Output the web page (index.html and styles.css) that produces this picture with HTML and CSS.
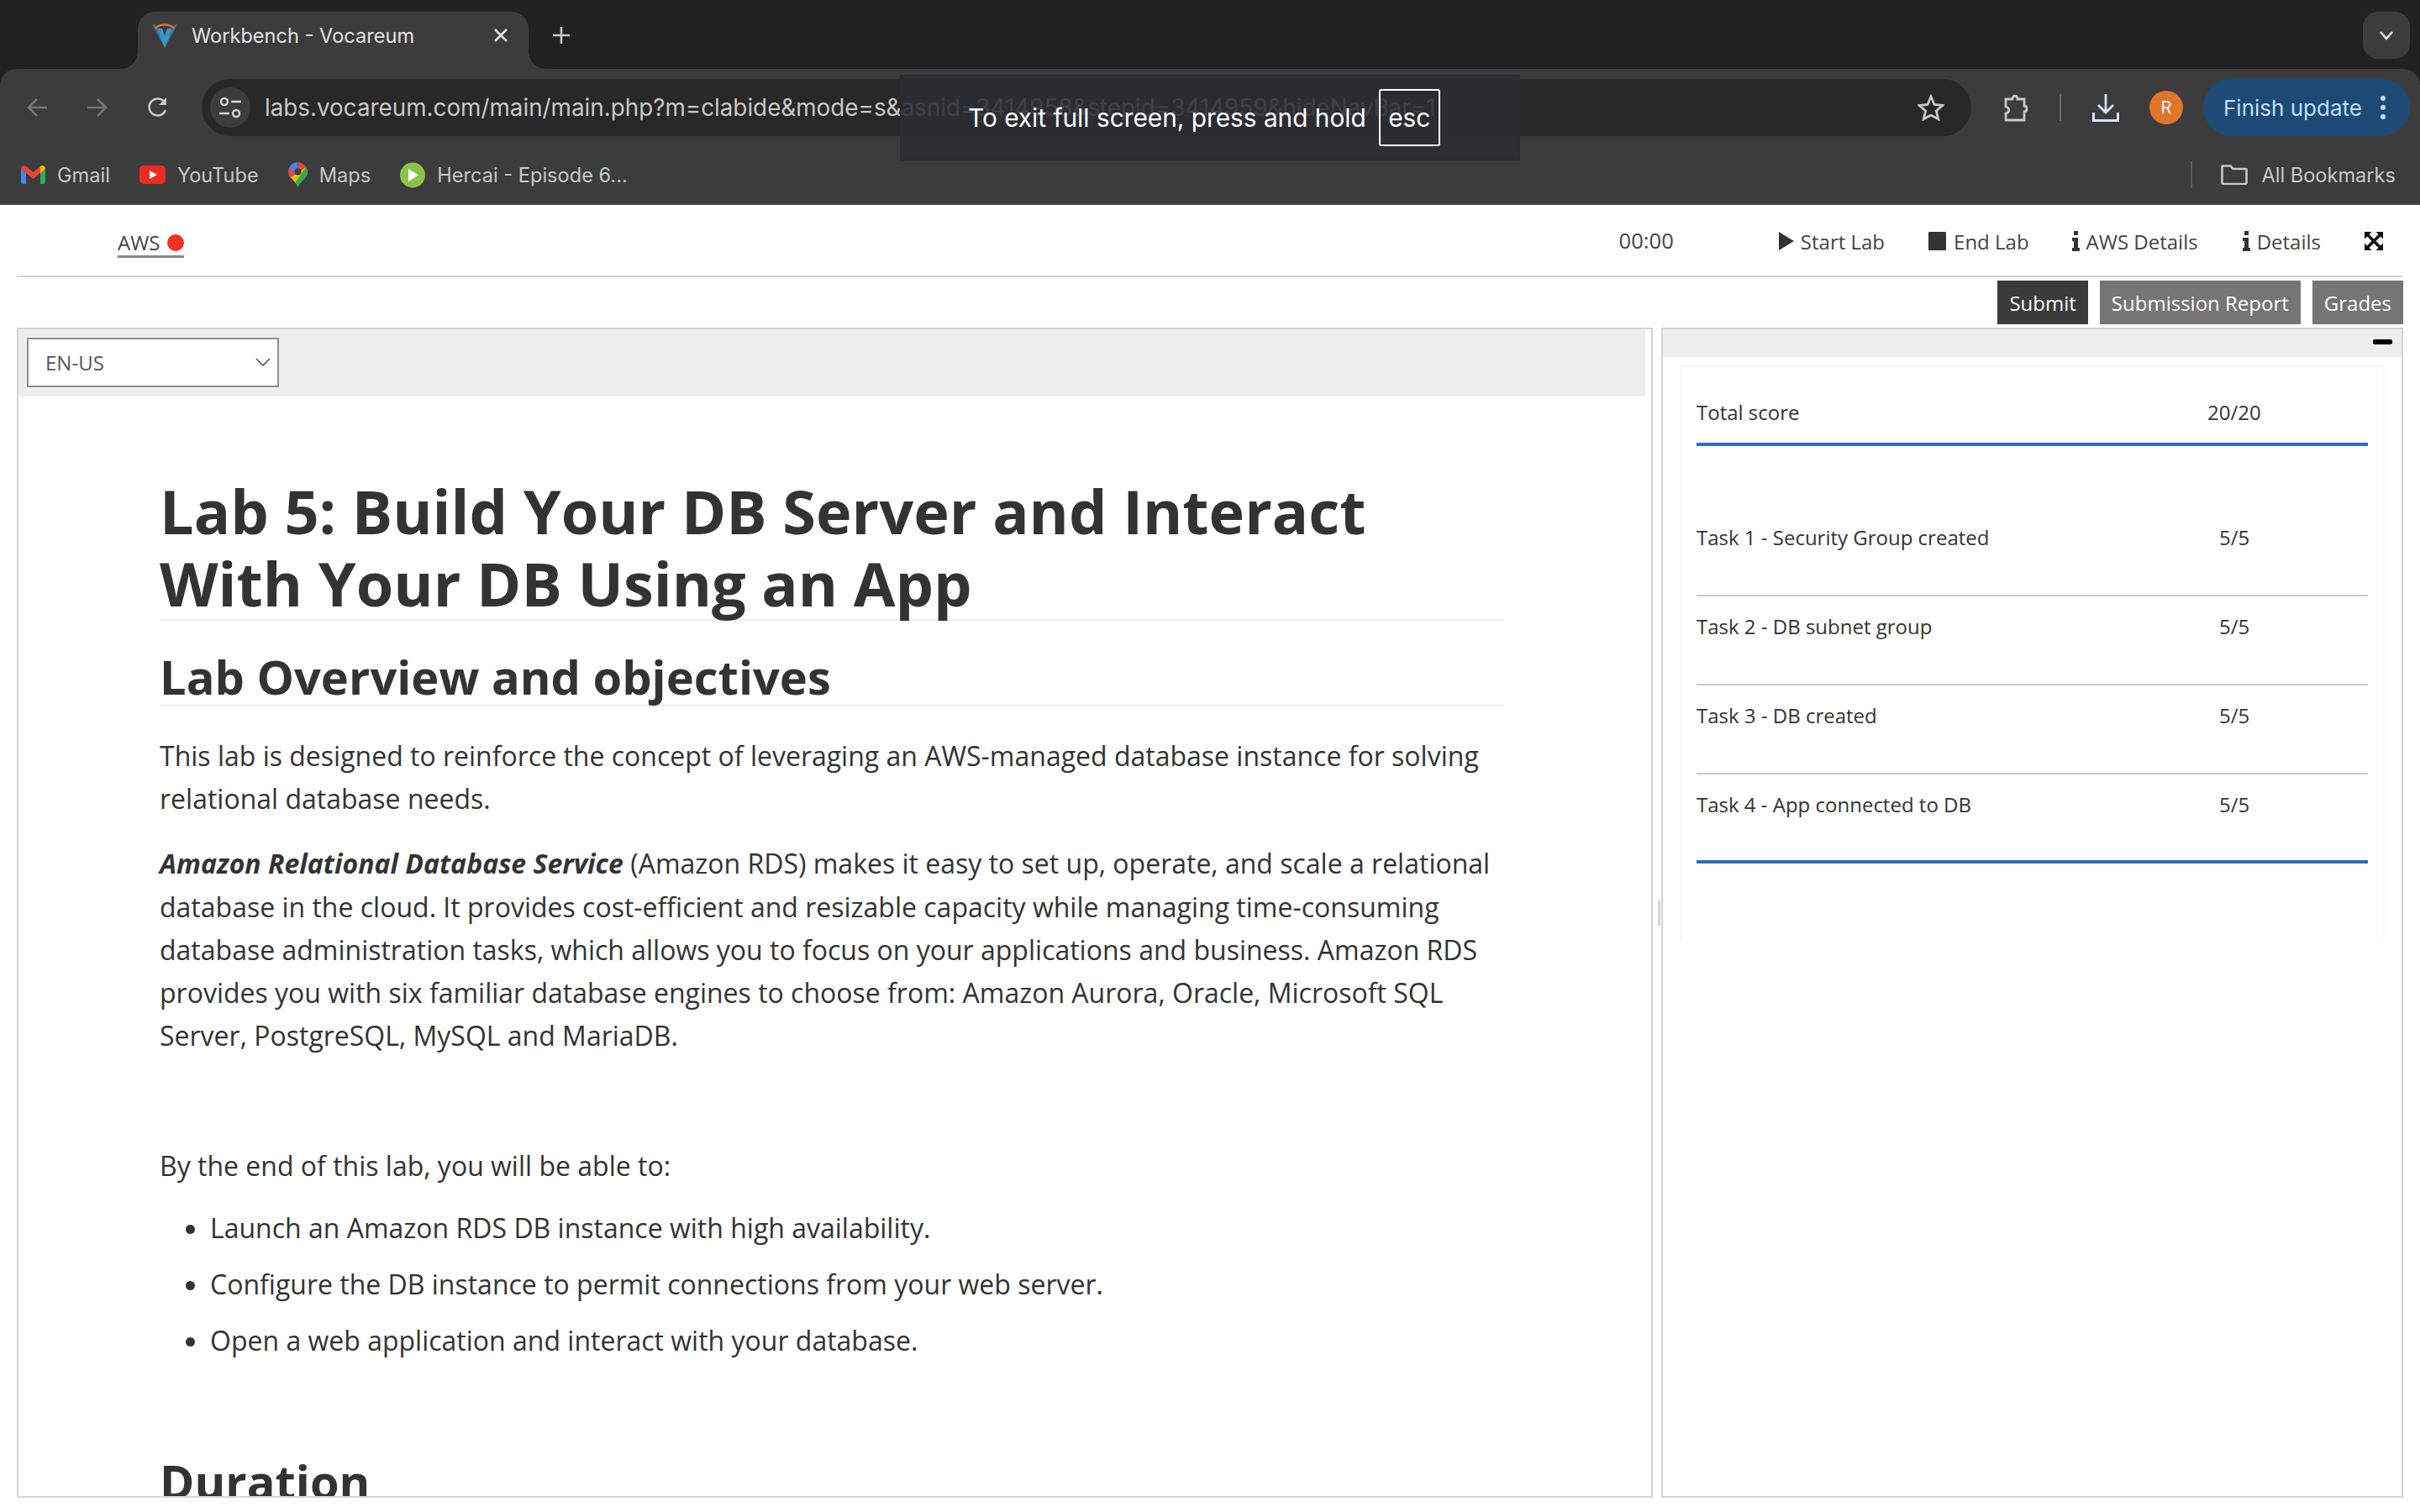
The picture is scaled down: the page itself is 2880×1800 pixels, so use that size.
FILE: index.html
```html
<!DOCTYPE html>
<html>
<head>
<meta name="viewport" content="width=device-width, initial-scale=1">
<title>Workbench - Vocareum</title>
<link rel="stylesheet" href="styles.css">
</head>
<body>

<div class="browser">
  <!-- browser tab strip -->
  <div class="tabstrip">
    <div class="tab">
      <svg class="favicon" viewBox="0 0 32 30">
        <path d="M1 2l3 0 12 24 12-24 3 0-15 28z" fill="#3f6f8f"/>
        <path d="M7 7h6l3 9 3-9h6l-9 23z" fill="#3b94c8"/>
        <path d="M5 7c4-6 18-6 22 0" fill="none" stroke="#d8703a" stroke-width="2.500"/>
      </svg>
      <span class="tab-title">Workbench - Vocareum</span>
      <svg class="tab-close" viewBox="0 0 18 18"><path d="M2 2l14 14M16 2L2 16" stroke="#e3e3e3" stroke-width="2.600"/></svg>
    </div>
    <svg class="tab-new" viewBox="0 0 22 22"><path d="M11 1v20M1 11h20" stroke="#c7c7c7" stroke-width="2.600"/></svg>
    <div class="tab-list">
      <svg viewBox="0 0 18 12" width="18" height="12"><path d="M2 2l7 8 7-8" fill="none" stroke="#e3e3e3" stroke-width="2.600"/></svg>
    </div>
  </div>

  <!-- browser toolbar -->
  <div class="toolbar">
    <svg class="nav-icon" viewBox="0 0 24 24"><path d="M24 12H3M12 2L2 12l10 10" fill="none" stroke="#757575" stroke-width="2.600"/></svg>
    <svg class="nav-icon" viewBox="0 0 24 24"><path d="M0 12h21M12 2l10 10-10 10" fill="none" stroke="#757575" stroke-width="2.600"/></svg>
    <svg class="nav-icon" viewBox="0 0 24 24"><path d="M21 15a10 10 0 1 1-1-9" fill="none" stroke="#c7c7c7" stroke-width="2.600"/><path d="M22 0v9h-9z" fill="#c7c7c7"/></svg>
    <div class="omnibox">
      <span class="site-info">
        <svg viewBox="0 0 26 26" width="26" height="26"><circle cx="6" cy="6" r="4" fill="none" stroke="#d6d6d6" stroke-width="2.400"/><path d="M14 6h12M0 20h12" stroke="#d6d6d6" stroke-width="2.400"/><circle cx="20" cy="20" r="4" fill="none" stroke="#d6d6d6" stroke-width="2.400"/></svg>
      </span>
      <span class="url">labs.vocareum.com/main/main.php?m=clabide&amp;mode=s&amp;asnid=3414958&amp;stepid=3414959&amp;hideNavBar=1</span>
      <svg class="star" viewBox="0 0 32 32"><path d="M16 3l4 9.500 10 .9-7.600 6.600 2.300 9.800L16 25l-8.700 4.800 2.300-9.800L2 13.400l10-.9z" fill="none" stroke="#c7c7c7" stroke-width="2.800"/></svg>
    </div>
    <svg class="puzzle" viewBox="0 0 32 33"><path d="M5 6h8c0-5 6-5 6 0h8v8c4 0 4 7 0 7v10H5v-8c5-1 5-7 0-8z" fill="none" stroke="#c7c7c7" stroke-width="2.800"/></svg>
    <span class="tool-sep"></span>
    <svg class="download" viewBox="0 0 32 33"><path d="M16 0v21M7 13l9 9 9-9" fill="none" stroke="#d5e3fb" stroke-width="2.800"/><path d="M1.500 22v9.500h29V22" fill="none" stroke="#d5e3fb" stroke-width="3"/></svg>
    <span class="avatar">R</span>
    <div class="update-btn">
      <span>Finish update</span>
      <span class="dots"><i></i><i></i><i></i></span>
    </div>
  </div>

  <!-- bookmarks -->
  <div class="bookmarks">
    <svg class="bm-icon" width="29" height="22" viewBox="0 0 29 22">
      <path d="M0 4v16a2 2 0 0 0 2 2h4V9z" fill="#4285f4"/>
      <path d="M29 4v16a2 2 0 0 1-2 2h-4V9z" fill="#34a853"/>
      <path d="M0 4c0-3 3-5 6-3l8.500 7L23 1c3-2 6 0 6 3l-6 5-8.500 7L6 9z" fill="#ea4335"/>
      <path d="M23 1c3-2 6 0 6 3l-6 5z" fill="#fbbc04"/>
    </svg>
    <span class="bm-label">Gmail</span>
    <svg class="bm-icon" width="31" height="22" viewBox="0 0 31 22"><rect width="31" height="22" rx="5" fill="#ee2b20"/><path d="M12 6l9 5-9 5z" fill="#fff"/></svg>
    <span class="bm-label">YouTube</span>
    <svg class="bm-icon" width="23" height="30" viewBox="0 0 23 30">
      <path d="M11.500 0A11.500 11.500 0 0 0 3 19l8.500-9z" fill="#4285f4"/>
      <path d="M11.500 0A11.500 11.500 0 0 1 21 6l-9.500 5z" fill="#ea4335"/>
      <path d="M1 7l7 4-5 8C0 16 0 11 1 7z" fill="#e8493a"/>
      <path d="M23 11.500c0 7-9 11-11.500 18.500C10 25 6 22 3 18l18-12c1 1.500 2 3.500 2 5.500z" fill="#fbbc04"/>
      <path d="M21 6c3 5 2 9-1 13-3 3-7 6-8.500 11-.5-2-1.500-4-3-6z" fill="#34a853"/>
      <circle cx="11.500" cy="11.500" r="4" fill="#3c3c3c"/>
    </svg>
    <span class="bm-label">Maps</span>
    <svg class="bm-icon" width="30" height="31" viewBox="0 0 30 31"><circle cx="15" cy="15.500" r="15" fill="#8bc34a"/><path d="M10 8l12 7.500L10 23z" fill="#fff"/></svg>
    <span class="bm-label">Hercai - Episode 6...</span>
    <span class="bm-sep"></span>
    <svg class="bm-icon" width="32" height="24" viewBox="0 0 32 24"><path d="M1.500 2.500a1 1 0 0 1 1-1h9l3 3.500h15a1 1 0 0 1 1 1v15a2 2 0 0 1-2 2h-25a2 2 0 0 1-2-2z" fill="none" stroke="#c7c7c7" stroke-width="2.600"/></svg>
    <span class="bm-label">All Bookmarks</span>
  </div>
</div>

<!-- full screen notice -->
<div class="fs-notice">
  <span>To exit full screen, press and hold</span>
  <span class="esc-key">esc</span>
</div>

<!-- lab page -->
<div class="lab-bar">
  <span class="aws-tab">AWS <span class="red-dot"></span></span>
  <span class="timer">00:00</span>
  <span class="lab-action start"><svg width="20" height="24" viewBox="0 0 20 24"><path d="M1 1l18 11L1 23z" fill="#333"/></svg>Start Lab</span>
  <span class="lab-action stop"><svg width="21" height="22" viewBox="0 0 21 22"><rect width="21" height="22" rx="1" fill="#333"/></svg>End Lab</span>
  <span class="lab-action info-aws"><svg width="9" height="24" viewBox="0 0 9 24"><path d="M2 0h5v5H2zM0 8h7v12h2v4H0v-4h2v-8H0z" fill="#333"/></svg>AWS Details</span>
  <span class="lab-action info"><svg width="9" height="24" viewBox="0 0 9 24"><path d="M2 0h5v5H2zM0 8h7v12h2v4H0v-4h2v-8H0z" fill="#333"/></svg>Details</span>
  <svg class="expand" width="22" height="22" viewBox="0 0 22 22">
    <path d="M3 3l16 16M19 3L3 19" stroke="#111" stroke-width="3.500"/>
    <path d="M0 0h8.500L0 8.500zM22 0v8.500L13.500 0zM0 22v-8.500L8.500 22zM22 22h-8.500L22 13.500z" fill="#111"/>
  </svg>
</div>

<div class="btn-row">
  <span class="lab-btn dark">Submit</span>
  <span class="lab-btn">Submission Report</span>
  <span class="lab-btn">Grades</span>
</div>

<div class="panels">
  <div class="panel-left">
    <div class="lang-bar">
      <div class="lang-select">
        <span>EN-US</span>
        <svg width="18" height="11" viewBox="0 0 18 11"><path d="M1 1l8 8 8-8" fill="none" stroke="#555" stroke-width="1.600"/></svg>
      </div>
    </div>
    <div class="readme">
      <h1>Lab 5: Build Your DB Server and Interact With Your DB Using an App</h1>
      <h2>Lab Overview and objectives</h2>
      <p>This lab is designed to reinforce the concept of leveraging an AWS-managed database instance for solving relational database needs.</p>
      <p><strong><em>Amazon Relational Database Service</em></strong> (Amazon RDS) makes it easy to set up, operate, and scale a relational database in the cloud. It provides cost-efficient and resizable capacity while managing time-consuming database administration tasks, which allows you to focus on your applications and business. Amazon RDS provides you with six familiar database engines to choose from: Amazon Aurora, Oracle, Microsoft SQL Server, PostgreSQL, MySQL and MariaDB.</p>
      <p>&nbsp;</p>
      <p>By the end of this lab, you will be able to:</p>
      <ul>
        <li>Launch an Amazon RDS DB instance with high availability.</li>
        <li>Configure the DB instance to permit connections from your web server.</li>
        <li>Open a web application and interact with your database.</li>
      </ul>
      <h2 class="duration">Duration</h2>
    </div>
  </div>

  <div class="divider"><span class="handle"></span></div>

  <div class="panel-right">
    <div class="grade-bar"><span class="minus"></span></div>
    <div class="grade-card">
      <div class="grade-row total"><span>Total score</span><span class="pts">20/20</span></div>
      <div class="grade-row"><span>Task 1 - Security Group created</span><span class="pts">5/5</span></div>
      <div class="grade-row"><span>Task 2 - DB subnet group</span><span class="pts">5/5</span></div>
      <div class="grade-row"><span>Task 3 - DB created</span><span class="pts">5/5</span></div>
      <div class="grade-row last"><span>Task 4 - App connected to DB</span><span class="pts">5/5</span></div>
    </div>
  </div>
</div>

</body>
</html>
```

FILE: styles.css
```css
* {
  box-sizing: border-box;
}

body {
  margin: 0;
  height: 1800px;
  overflow: hidden;
  position: relative;
  background: #fff;
  font-family: "Open Sans", sans-serif;
  color: #333;
}

svg {
  display: block;
  flex: none;
}

.browser {
  background: #202221;
  font-family: Inter, "Liberation Sans", sans-serif;
}

/* Tab strip */
.tabstrip {
  height: 82px;
  display: flex;
  align-items: flex-start;
  padding: 14px 12px 0 164px;
}

.tab {
  width: 465px;
  height: 68px;
  background: #3c3c3c;
  border-radius: 20px 20px 0 0;
  display: flex;
  align-items: center;
  padding: 0 24px 12px 16px;
  position: relative;
}

/* Flares at the bottom of the active tab */
.tab:before,
.tab:after {
  content: "";
  position: absolute;
  bottom: 0;
  width: 20px;
  height: 20px;
}

.tab:before {
  left: -20px;
  background: radial-gradient(circle at 0 0, #202221 19.500px, #3c3c3c 20px);
}

.tab:after {
  right: -20px;
  background: radial-gradient(circle at 100% 0, #202221 19.500px, #3c3c3c 20px);
}

.favicon {
  width: 32px;
  height: 30px;
}

.tab-title {
  margin-left: 16px;
  font-size: 23.600px;
  color: #e3e3e3;
  flex: 1;
}

.tab-close {
  width: 18px;
  height: 18px;
}

.tab-new {
  width: 22px;
  height: 22px;
  margin: 17px 0 0 28px;
}

.tab-list {
  margin-left: auto;
  width: 56px;
  height: 56px;
  background: #3c3c3c;
  border-radius: 18px;
  display: flex;
  align-items: center;
  justify-content: center;
}

/* Toolbar */
.toolbar {
  height: 80px;
  background: #3c3c3c;
  display: flex;
  align-items: center;
  padding: 12px 12px 0 32px;
  border-radius: 20px 20px 0 0;
}

.nav-icon {
  width: 24px;
  height: 24px;
  margin-right: 48px;
}

.nav-icon:nth-child(3) {
  margin-right: 40px;
}

.omnibox {
  width: 2106px;
  height: 68px;
  background: #282828;
  border-radius: 34px;
  display: flex;
  align-items: center;
  padding: 0 32px 0 10px;
  overflow: hidden;
}

.site-info {
  width: 48px;
  height: 48px;
  border-radius: 50%;
  background: #3c3c3c;
  display: flex;
  align-items: center;
  justify-content: center;
  flex: none;
}

.url {
  margin-left: 17px;
  font-size: 27.800px;
  color: #c7c7c7;
  white-space: nowrap;
  flex: 1;
  overflow: hidden;
}

.star {
  width: 32px;
  height: 32px;
}

.puzzle {
  width: 32px;
  height: 33px;
  margin-left: 36px;
}

.tool-sep {
  width: 2px;
  height: 32px;
  background: #6a6a6a;
  margin: 0 37px;
}

.download {
  width: 32px;
  height: 33px;
}

.avatar {
  width: 40px;
  height: 40px;
  border-radius: 50%;
  margin-left: 36px;
  background: #e0752c;
  color: #fff;
  font-size: 20px;
  display: flex;
  align-items: center;
  justify-content: center;
}

.update-btn {
  margin-left: 24px;
  width: 246px;
  height: 68px;
  background: #1d4a75;
  border-radius: 34px;
  color: #c4dffa;
  font-size: 26px;
  display: flex;
  align-items: center;
  justify-content: space-between;
  padding: 0 29px 0 24px;
}

.dots {
  display: flex;
  flex-direction: column;
  gap: 5px;
}

.dots i {
  width: 6px;
  height: 6px;
  border-radius: 50%;
  background: #c4dffa;
}

/* Bookmarks bar */
.bookmarks {
  height: 82px;
  background: #3c3c3c;
  border-bottom: 2px solid #4c4c4c;
  display: flex;
  align-items: center;
  padding: 12px 29px 0 25px;
  font-size: 23.600px;
  color: #c7c7c7;
}

.bm-label {
  margin: 0 35px 0 14px;
}

.bm-sep {
  width: 2px;
  height: 32px;
  background: #5c5c5c;
  margin: 0 34px 0 auto;
}

.bookmarks .bm-label:last-child {
  margin: 0 0 0 16px;
}

/* Full screen notice, lies over the toolbar */
.fs-notice {
  position: absolute;
  left: 1071px;
  top: 89px;
  width: 738px;
  height: 102px;
  background: rgba(43, 44, 50, 0.88);
  border: 1px solid #2a2b2e;
  display: flex;
  align-items: center;
  padding-left: 80px;
  color: #fff;
  font-family: Inter, "Liberation Sans", sans-serif;
  font-size: 29.800px;
}

.esc-key {
  margin-left: 15px;
  width: 73px;
  height: 68px;
  border: 2px solid #fff;
  border-radius: 3px;
  display: flex;
  align-items: center;
  justify-content: center;
}

/* Lab header */
.lab-bar {
  height: 86px;
  margin: 0 21px 0 20px;
  border-bottom: 2px solid #d4d4d4;
  display: flex;
  align-items: center;
  padding: 0 23px 0 120px;
  font-size: 24px;
  color: #444;
}

.aws-tab {
  height: 38px;
  border-bottom: 3px solid #888;
  display: flex;
  gap: 8px;
  align-items: center;
  line-height: 30px;
  margin-top: 4px;
  padding-top: 4px;
}

.red-dot {
  width: 20px;
  height: 20px;
  border-radius: 50%;
  background: #ee3224;
}

.timer {
  margin-left: auto;
  margin-right: 124px;
  font-size: 25.600px;
}

.lab-action {
  display: flex;
  align-items: center;
  gap: 8px;
  margin-top: 2px;
}

.lab-action.start {
  gap: 7px;
  margin-right: 52px;
}

.lab-action.stop {
  gap: 9px;
  margin-right: 51px;
}

.lab-action.info-aws {
  margin-right: 53px;
}

.lab-action.info {
  margin-right: 52px;
}

.expand {
  margin-top: 2px;
}

.btn-row {
  height: 60px;
  display: flex;
  justify-content: flex-end;
  gap: 14px;
  padding: 4px 20px 4px 0;
}

.lab-btn {
  height: 52px;
  background: #757575;
  color: #fff;
  font-size: 24px;
  display: flex;
  align-items: center;
  padding: 0 14px;
}

.lab-btn.dark {
  background: #3b3b3b;
}

/* Two panes */
.panels {
  height: 1393px;
  margin: 0 20px;
  display: flex;
}

.panel-left {
  width: 1947px;
  border: 2px solid #d4d4d4;
  overflow: hidden;
}

.lang-bar {
  height: 80px;
  margin-right: 7px;
  background: #eee;
  padding: 10px;
}

.lang-select {
  width: 300px;
  height: 59px;
  background: #fff;
  border: 2px solid #8f8f8f;
  display: flex;
  align-items: center;
  justify-content: space-between;
  padding: 0 8px 0 20px;
  font-size: 24px;
  color: #555;
}

.readme {
  padding: 93px 0 0 168px;
  width: 1768px;
}

h1 {
  margin: 0 0 33px;
  font-size: 72px;
  line-height: 86px;
  font-weight: 700;
  border-bottom: 2px solid #eee;
}

h2 {
  margin: 0 0 33px;
  font-size: 56px;
  line-height: 67px;
  font-weight: 700;
  border-bottom: 2px solid #eee;
}

h2.duration {
  margin-top: 109px;
  border-bottom: 0;
}

p {
  margin: 0 0 26px;
  font-size: 32px;
  line-height: 51.200px;
}

ul {
  margin: -3px 0 0;
  padding-left: 60px;
  font-size: 32px;
  line-height: 51.200px;
}

li {
  margin-bottom: 16px;
}

.divider {
  width: 10px;
  position: relative;
}

.handle {
  position: absolute;
  left: 6px;
  top: 682px;
  width: 3px;
  height: 30px;
  background: #d4d4d4;
}

.panel-right {
  flex: 1;
  border: 2px solid #d4d4d4;
  display: flex;
  flex-direction: column;
}

.grade-bar {
  height: 33px;
  background: #eee;
  display: flex;
  justify-content: flex-end;
  padding: 12px 11px 0 0;
}

.minus {
  width: 23px;
  height: 6px;
  border-radius: 2px;
  background: #000;
}

.grade-card {
  height: 685px;
  margin: 10px 20px 0;
  border: 2px solid #f9f9f9;
  border-bottom: 0;
  padding: 0 18px;
  font-size: 24px;
  color: #333;
}

.grade-row {
  height: 106px;
  border-bottom: 2px solid #c8c8c8;
  padding-top: 19px;
  display: flex;
  line-height: 33px;
}

.grade-row span:first-child {
  flex: 1;
}

.pts {
  width: 260px;
  padding-left: 83px;
}

.grade-row.total {
  height: 94px;
  margin-bottom: 73px;
  padding-top: 37px;
  border-bottom: 4px solid #2f6cc4;
}

.grade-row.total .pts {
  padding-left: 69px;
}

.grade-row.last {
  border-bottom: 4px solid #2f6cc4;
}
```
